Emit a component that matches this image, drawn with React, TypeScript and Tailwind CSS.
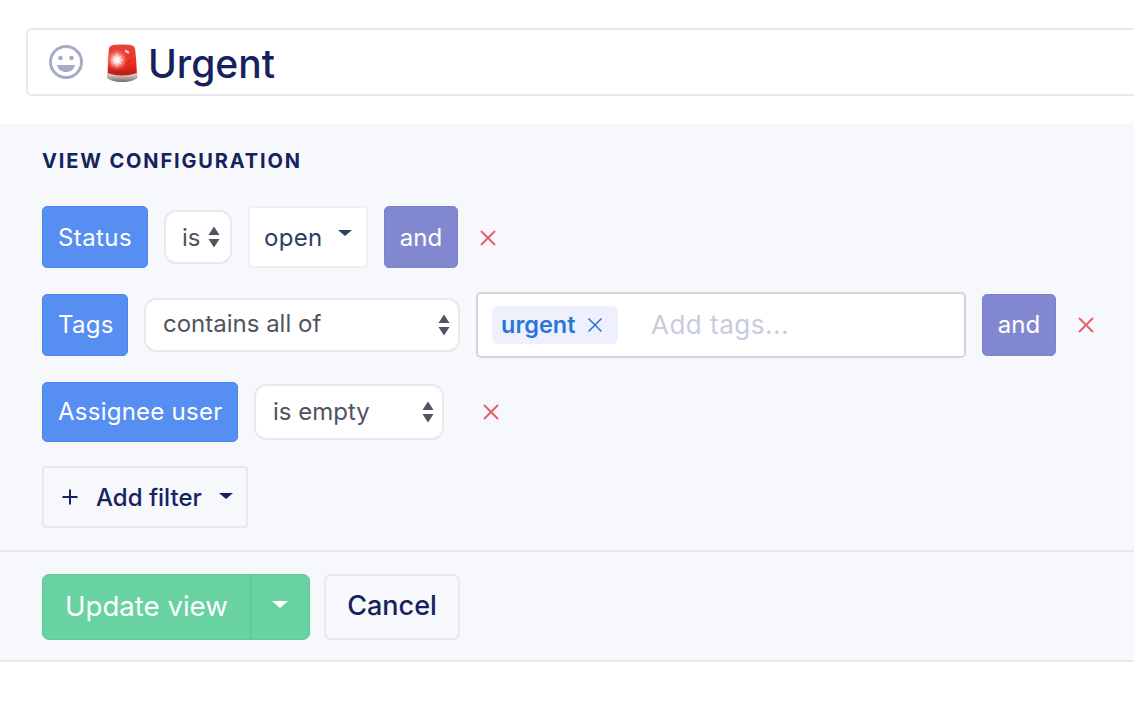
import React from "react";

const Arrows = ({ className = "" }: { className?: string }) => (
  <svg width="12" height="22" viewBox="0 0 12 22" className={`shrink-0 ${className}`}>
    <path d="M6 0.5L11.5 9H0.5Z" fill="#4f5560" />
    <path d="M6 21.5L11.5 13H0.5Z" fill="#4f5560" />
  </svg>
);

const Caret = ({ color, w = 14, h = 6 }: { color: string; w?: number; h?: number }) => (
  <svg width={w} height={h} viewBox="0 0 14 6" className="block">
    <path d="M0 0H14L7 6Z" fill={color} />
  </svg>
);

const Remove = () => (
  <svg width="18" height="18" viewBox="0 0 18 18" className="block">
    <path d="M2 2L16 16M16 2L2 16" stroke="#e5616f" strokeWidth="2" fill="none" />
  </svg>
);

const Siren = () => (
  <svg width="32" height="38" viewBox="0 0 32 38" className="block">
    <defs>
      <linearGradient id="sb" x1="0" y1="0" x2="0" y2="1">
        <stop offset="0" stopColor="#e6dcd6" />
        <stop offset="0.45" stopColor="#b5aaa5" />
        <stop offset="1" stopColor="#736a67" />
      </linearGradient>
      <linearGradient id="sr" x1="0" y1="0" x2="0" y2="1">
        <stop offset="0" stopColor="#e2463c" />
        <stop offset="0.6" stopColor="#ec2e25" />
        <stop offset="1" stopColor="#b31a14" />
      </linearGradient>
      <radialGradient id="sg" cx="0.5" cy="0.5" r="0.5">
        <stop offset="0" stopColor="#ffffff" />
        <stop offset="0.3" stopColor="#ffd4d0" />
        <stop offset="1" stopColor="#ff6a60" stopOpacity="0" />
      </radialGradient>
    </defs>
    <path d="M1.5 32C2 18 2.5 8 3 4.5C3.5 1 8 0.5 16 0.5C24 0.5 28.5 1 29 4.5C29.5 8 30.5 18 31 32Z" fill="url(#sr)" />
    <path d="M1 31C1 29.5 2 29 3 29.5C11 32 21 32 29.5 29.5C30.5 29 31.5 29.5 31.5 31V34C24 39.5 8 39.5 1 34Z" fill="url(#sb)" />
    <circle cx="11" cy="16" r="11" fill="url(#sg)" />
    <path d="M11 9V23M5 16H17M7 12L15 20M15 12L7 20" stroke="#ffffff" strokeWidth="1" opacity="0.6" />
    <path d="M19 6.5L23 9" stroke="#ffc4bf" strokeWidth="2.2" />
    <path d="M19 19L25 17" stroke="#9e1a14" strokeWidth="1.2" opacity="0.5" />
  </svg>
);

const Smile = () => (
  <svg width="34" height="34" viewBox="0 0 34 34" className="block shrink-0">
    <circle cx="17" cy="17" r="15.5" fill="none" stroke="#a7abc8" strokeWidth="3" />
    <circle cx="11.5" cy="13" r="2.3" fill="#a7abc8" />
    <circle cx="22.5" cy="13" r="2.3" fill="#a7abc8" />
    <path d="M8 20H26C25 25 21 27 17 27C13 27 9 25 8 20Z" fill="#a7abc8" />
  </svg>
);

const And = ({ shifted = false }: { shifted?: boolean }) => (
  <div className={`flex h-[62px] w-[74px] shrink-0 items-center justify-center rounded-[5px] border border-[#7b83c9] bg-[#8288d0] text-[24px] text-white ${shifted ? "pt-[2px]" : ""}`}>
    and
  </div>
);

export default function App() {
  return (
    <div className="h-[704px] w-[1134px] overflow-hidden bg-white pt-[28px] font-['Inter',sans-serif]">
      <div className="mb-[28px] ml-[26px] flex h-[68px] w-[1120px] items-center rounded-l-[5px] border-2 border-r-0 border-[#e8e8ee] bg-white pl-[21px]">
        <Smile />
        <span className="ml-[23px] mt-[2px] shrink-0"><Siren /></span>
        <span className="ml-[10px] mt-[2px] text-[39px] font-medium leading-none text-[#15225e]">Urgent</span>
      </div>

      <div className="h-[538px] border-b-2 border-[#e8e8ee] bg-[#f7f8fc]">
        <div className="px-[42px] pt-[24px]">
          <h2 className="mb-[33px] pt-[1px] text-[20px] font-bold leading-[24px] tracking-[1.85px] text-[#15225e]">VIEW CONFIGURATION</h2>

          <div className="mb-[24px] flex items-center">
            <div className="flex h-[62px] w-[106px] shrink-0 items-center rounded-[5px] border border-[#4f85e8] bg-[#568ef2] pl-[15px] pt-[2px] text-[24px] tracking-[0.4px] text-white">Status</div>
            <div className="ml-[16px] flex h-[54px] w-[68px] shrink-0 items-center rounded-[12px] border-2 border-[#e8e8ee] bg-white pl-[16px] text-[24px] text-[#4f5560]">
              <span className="pt-[2px]">is</span>
              <Arrows className="ml-[8px]" />
            </div>
            <div className="ml-[16px] flex h-[62px] w-[120px] shrink-0 items-center rounded-[4px] border-2 border-[#eeeef3] bg-white pl-[14px] pt-[2px] text-[24px] tracking-[0.3px] text-[#2e3f63]">
              open
              <span className="mb-[10px] ml-[16px]"><Caret color="#2e3f63" /></span>
            </div>
            <div className="ml-[16px] shrink-0"><And shifted /></div>
            <span className="ml-[21px] mt-[2px] shrink-0"><Remove /></span>
          </div>

          <div className="mb-[24px] flex items-center">
            <div className="flex h-[62px] w-[86px] shrink-0 items-center rounded-[5px] border border-[#4f85e8] bg-[#568ef2] pb-[1px] pl-[15px] text-[24px] tracking-[0.25px] text-white">Tags</div>
            <div className="ml-[16px] flex h-[54px] w-[316px] shrink-0 items-center justify-between rounded-[12px] border-2 border-[#e8e8ee] bg-white pl-[17px] pr-[8px] text-[24px] text-[#4f5560]">
              <span className="pb-[2px]">contains all of</span>
              <Arrows />
            </div>
            <div className="ml-[16px] flex h-[66px] w-[490px] shrink-0 items-center rounded-[5px] border-2 border-[#d3d4da] bg-white pl-[14px]">
              <div className="flex h-[38px] w-[126px] shrink-0 items-center rounded-[6px] bg-[#eef1fd] pl-[9px] text-[23.5px] font-semibold text-[#2c75d9]">
                urgent
                <svg width="16" height="16" viewBox="0 0 16 16" className="ml-[12px] block">
                  <path d="M1.5 1.5L14.5 14.5M14.5 1.5L1.5 14.5" stroke="#2c75d9" strokeWidth="1.6" fill="none" />
                </svg>
              </div>
              <span className="ml-[33px] pb-[2px] text-[26px] tracking-[0.5px] text-[#c8cbdf]">Add tags...</span>
            </div>
            <div className="ml-[16px] shrink-0"><And /></div>
            <span className="ml-[21px] shrink-0"><Remove /></span>
          </div>

          <div className="mb-[24px] flex items-center">
            <div className="flex h-[60px] w-[196px] shrink-0 items-center rounded-[5px] border border-[#4f85e8] bg-[#568ef2] pl-[15px] text-[24px] tracking-[0.25px] text-white">Assignee user</div>
            <div className="ml-[16px] flex h-[56px] w-[190px] shrink-0 items-center justify-between rounded-[12px] border-2 border-[#e8e8ee] bg-white pl-[17px] pr-[8px] text-[24px] text-[#4f5560]">
              is empty
              <Arrows />
            </div>
            <span className="ml-[38px] shrink-0"><Remove /></span>
          </div>

          <div className="flex h-[62px] w-[206px] items-center rounded-[4px] border-2 border-[#e8e8ee] pl-[18px] pt-[2px] text-[24px] font-medium text-[#15225e]">
            <svg width="16" height="16" viewBox="0 0 16 16" className="mb-[2px] block">
              <path d="M8 0.5V15.5M0.5 8H15.5" stroke="#15225e" strokeWidth="2" fill="none" />
            </svg>
            <span className="ml-[18px]">Add filter</span>
            <span className="mb-[4px] ml-[17px]"><Caret color="#15225e" /></span>
          </div>
        </div>

        <div className="mt-[22px] border-t-2 border-[#e8e8ee] px-[42px] pt-[22px]">
          <div className="flex items-stretch">
            <div className="flex h-[66px] w-[268px] rounded-[7px] border border-[#5ecb99] bg-[#68d3a1] text-[27.6px] text-white">
              <div className="flex w-[208px] items-center border-r border-[#5cc596] pb-[1px] pl-[22px]">Update view</div>
              <div className="flex flex-1 items-center justify-center pb-[6px]"><Caret color="#ffffff" w={16} h={7} /></div>
            </div>
            <div className="ml-[14px] flex h-[66px] w-[136px] items-center justify-center rounded-[7px] border-2 border-[#e8e8ee] pb-[1px] text-[27px] font-medium text-[#15225e]">Cancel</div>
          </div>
        </div>
      </div>
    </div>
  );
}
